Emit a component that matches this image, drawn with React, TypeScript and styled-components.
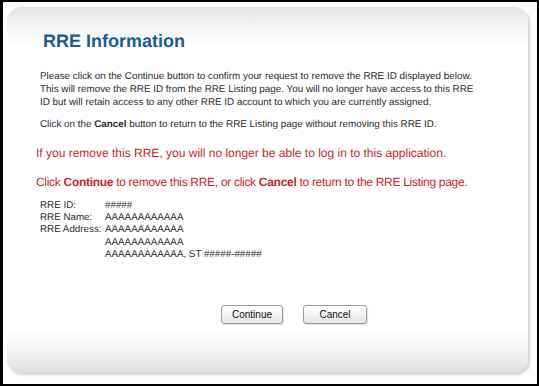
import React from "react";
import styled, { createGlobalStyle } from "styled-components";

const GlobalStyle = createGlobalStyle`
  html, body {
    margin: 0;
    padding: 0;
    background: #ffffff;
  }
  body {
    font-family: "Liberation Sans", Arial, sans-serif;
    text-rendering: geometricPrecision;
  }
`;

const Frame = styled.div`
  box-sizing: border-box;
  width: 539px;
  height: 386px;
  border: 2px solid #000;
  border-left-width: 3px;
  padding: 5px 9px 11px 4px;
  display: flex;
  background: #fff;
`;

const Panel = styled.div`
  flex: 1;
  border-radius: 14px;
  padding: 23px 0 0 33px;
  background: linear-gradient(
    to bottom,
    #e3e3e3 0px,
    #f6f6f6 22px,
    #ffffff 42px,
    #ffffff calc(100% - 44px),
    #f3f3f3 calc(100% - 24px),
    #dedede 100%
  );
  box-shadow: 2px 2px 3px rgba(0, 0, 0, 0.18);
`;

const Title = styled.h1`
  margin: 0 0 18px 3px;
  font-size: 18px;
  line-height: 22px;
  font-weight: bold;
  color: #1c5d8c;
`;

const Text = styled.p`
  margin: 0 0 9px;
  font-size: 9.85px;
  line-height: 13px;
  color: #2b2b2b;
  white-space: nowrap;
`;

const Warning = styled.p<{ gap: number; tight?: boolean }>`
  margin: ${(p) => p.gap}px 0 0 -4px;
  font-size: 12px;
  line-height: 14px;
  color: #c3262f;
  white-space: nowrap;
  letter-spacing: ${(p) => (p.tight ? "-0.3px" : "normal")};
`;

const InfoGrid = styled.div`
  margin-top: 11px;
  display: grid;
  grid-template-columns: 65px auto;
  font-size: 9.8px;
  line-height: 12.2px;
  color: #2b2b2b;
  white-space: nowrap;
`;

const Label = styled.span``;

const Value = styled.span<{ col?: number }>`
  grid-column: ${(p) => p.col ?? "auto"};
`;

const ButtonRow = styled.div`
  margin-top: 44px;
  padding-left: 181px;
  display: flex;
  gap: 20px;
`;

const Button = styled.button<{ w: number }>`
  box-sizing: border-box;
  width: ${(p) => p.w}px;
  height: 19px;
  padding: 0;
  font-family: "Liberation Sans", Arial, sans-serif;
  font-size: 10px;
  color: #111;
  border: 1px solid #9c9c9c;
  border-radius: 3px;
  background: linear-gradient(to bottom, #ffffff 0%, #f3f3f3 50%, #e4e4e4 100%);
  box-shadow: 1px 1px 1px rgba(0, 0, 0, 0.12);
  cursor: pointer;
`;

export default function App() {
  return (
    <>
      <GlobalStyle />
      <Frame>
        <Panel>
          <Title>RRE Information</Title>
          <Text>
            Please click on the Continue button to confirm your request to remove the RRE ID displayed below.
            <br />
            This will remove the RRE ID from the RRE Listing page. You will no longer have access to this RRE
            <br />
            ID but will retain access to any other RRE ID account to which you are currently assigned.
          </Text>
          <Text>
            Click on the <b>Cancel</b> button to return to the RRE Listing page without removing this RRE ID.
          </Text>
          <Warning gap={15}>
            If you remove this RRE, you will no longer be able to log in to this application.
          </Warning>
          <Warning gap={15} tight>
            Click <b>Continue</b> to remove this RRE, or click <b>Cancel</b> to return to the RRE Listing page.
          </Warning>
          <InfoGrid>
            <Label>RRE ID:</Label>
            <Value>#####</Value>
            <Label>RRE Name:</Label>
            <Value>AAAAAAAAAAAA</Value>
            <Label>RRE Address:</Label>
            <Value>AAAAAAAAAAAA</Value>
            <Value col={2}>AAAAAAAAAAAA</Value>
            <Value col={2}>AAAAAAAAAAAA, ST #####-#####</Value>
          </InfoGrid>
          <ButtonRow>
            <Button w={62}>Continue</Button>
            <Button w={64}>Cancel</Button>
          </ButtonRow>
        </Panel>
      </Frame>
    </>
  );
}
